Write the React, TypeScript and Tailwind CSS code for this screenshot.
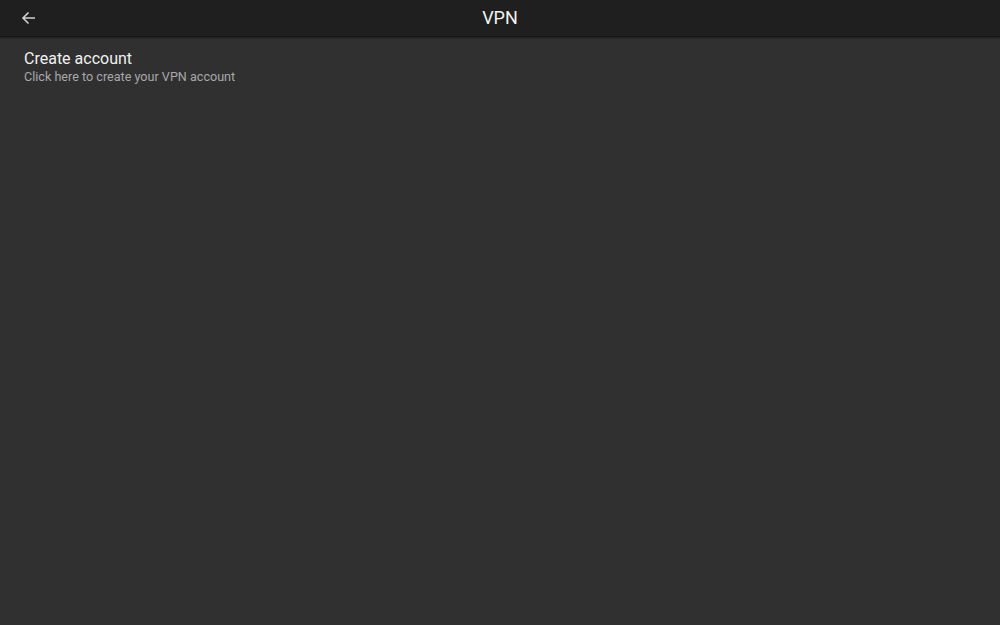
export default function App() {
  return (
    <div className="flex h-[625px] w-[1000px] flex-col bg-[#303030] font-['Roboto',sans-serif]">
      {/* Toolbar */}
      <div className="relative flex h-[37px] shrink-0 items-center justify-center border-b border-[#151515] bg-[#1f1f1f] shadow-[0_1px_2px_rgba(0,0,0,0.4)]">
        <button className="absolute left-[21px] top-[11px] text-[#cfcfcf]">
          <svg width="15" height="14" viewBox="0 0 15 14" fill="none" stroke="currentColor" strokeWidth="1.6">
            <path d="M14 7H2.2M7.5 1.5L2 7l5.5 5.5" />
          </svg>
        </button>
        <h1 className="text-[18px] leading-none text-[#f2f2f2]">VPN</h1>
      </div>

      {/* List */}
      <div className="cursor-pointer px-[24px] pt-[12px]">
        <div className="text-[16px] leading-[19px] text-[#f0f0f0]">Create account</div>
        <div className="text-[12.6px] leading-[17px] text-[#a8a8a8]">
          Click here to create your VPN account
        </div>
      </div>
    </div>
  );
}
